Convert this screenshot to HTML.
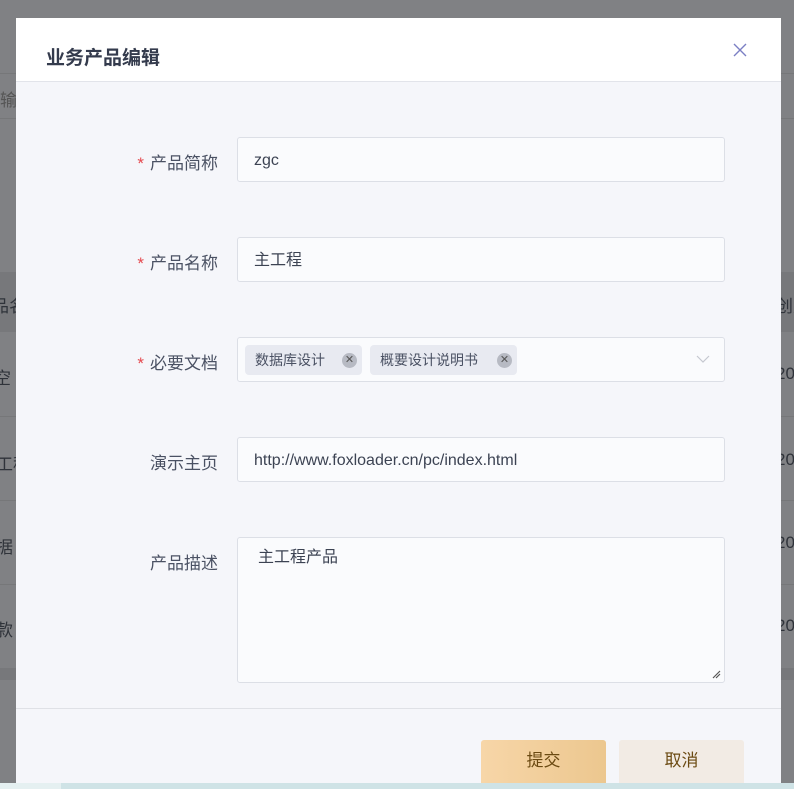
<!DOCTYPE html>
<html><head><meta charset="utf-8"><style>
*{box-sizing:border-box;margin:0;padding:0}
body{width:794px;height:789px;overflow:hidden;background:#808184;position:relative;font-family:"Liberation Sans","Noto Sans CJK SC",sans-serif;color:#3c4353}
.bg{position:absolute;color:#2f333a;font-size:17px;white-space:nowrap}
.line{position:absolute;left:0;width:794px;height:1px;background:#767779}
.dlg{position:absolute;left:16px;top:18px;width:765px;height:771px;background:#f5f6fa;overflow:hidden}
.hd{height:64px;background:#fff;border-bottom:1px solid #e2e4ea;position:relative}
.hd h1{position:absolute;left:30px;top:25px;font-size:19px;font-weight:bold;color:#343b4d}
.x{position:absolute;left:717px;top:25px;width:14px;height:14px}
.lab{position:absolute;width:202px;text-align:right;font-size:17px;color:#4a5163;white-space:nowrap}
.lab b{color:#e5484d;font-weight:normal;margin-right:6px}
.in{position:absolute;left:221px;width:488px;height:45px;background:#fafbfd;border:1px solid #dcdfe6;border-radius:3px;font-size:16px;padding-left:16px;line-height:45px;color:#3c4353}
.tag{position:absolute;top:7px;height:30px;background:#e8eaf1;border-radius:4px;font-size:14px;line-height:30px;padding-left:10px;color:#4a5163}
.tag i{position:absolute;top:8px;width:15px;height:15px;border-radius:50%;background:#b7bac3;color:#555;font-style:normal;font-size:11px;line-height:15px;text-align:center}
.btn{position:absolute;top:722px;width:125px;height:50px;border-radius:3px;font-size:17px;text-align:center;line-height:42px;color:#6b4a12}
</style></head><body>
<div class="line" style="top:73px"></div><div class="line" style="top:118px"></div>
<div class="bg" style="left:0;top:86px;color:#555">输</div>
<div style="position:absolute;left:0;top:272px;width:794px;height:60px;background:#77787b"></div>
<div class="bg" style="left:-8px;top:292px">品名</div>
<div class="bg" style="left:776px;top:292px">创建</div>
<div class="line" style="top:416px"></div><div class="line" style="top:500px"></div><div class="line" style="top:584px"></div>
<div class="bg" style="left:-6px;top:364px">空</div><div class="bg" style="left:776px;top:364px">20</div>
<div class="bg" style="left:-4px;top:450px">工程</div><div class="bg" style="left:776px;top:450px">20</div>
<div class="bg" style="left:-4px;top:533px">据</div><div class="bg" style="left:776px;top:533px">20</div>
<div class="bg" style="left:-4px;top:616px">款</div><div class="bg" style="left:776px;top:616px">20</div>
<div style="position:absolute;left:0;top:668px;width:794px;height:12px;background:#77787b"></div>
<div class="dlg">
<div class="hd"><h1>业务产品编辑</h1>
<svg class="x" viewBox="0 0 14 14"><path d="M1 1L13 13M13 1L1 13" stroke="#7b7fc4" stroke-width="1.4"/></svg></div>
<div class="lab" style="top:131px"><b>*</b>产品简称</div>
<div class="in" style="top:119px">zgc</div>
<div class="lab" style="top:231px"><b>*</b>产品名称</div>
<div class="in" style="top:219px">主工程</div>
<div class="lab" style="top:331px"><b>*</b>必要文档</div>
<div class="in" style="top:319px">
<div class="tag" style="left:7px;width:117px">数据库设计<i style="left:97px">✕</i></div>
<div class="tag" style="left:132px;width:147px">概要设计说明书<i style="left:127px">✕</i></div>
<svg style="position:absolute;left:458px;top:16px" width="14" height="10" viewBox="0 0 14 10"><path d="M1 2L7 8L13 2" fill="none" stroke="#c5c8d0" stroke-width="1.2"/></svg>
</div>
<div class="lab" style="top:431px">演示主页</div>
<div class="in" style="top:419px">http://www.foxloader.cn/pc/index.html</div>
<div class="lab" style="top:531px">产品描述</div>
<div class="in" style="top:519px;height:146px;line-height:1;padding:12px 20px">主工程产品
<svg style="position:absolute;right:3px;bottom:3px" width="9" height="9" viewBox="0 0 9 9"><path d="M1 8L8 1M4 8L8 4" stroke="#555" stroke-width="1.2"/></svg></div>
<div style="position:absolute;left:0;top:690px;width:765px;height:1px;background:#dfe1e6"></div>
<div class="btn" style="left:465px;background:linear-gradient(90deg,#f7d6a8,#ecc78f)">提交</div>
<div class="btn" style="left:603px;background:#f2ebe4">取消</div>
</div>
<div style="position:absolute;left:0;top:783px;width:794px;height:6px;background:#cfe3e6"></div>
<div style="position:absolute;left:0;top:783px;width:61px;height:6px;background:#e5f0f1"></div>
</body></html>
